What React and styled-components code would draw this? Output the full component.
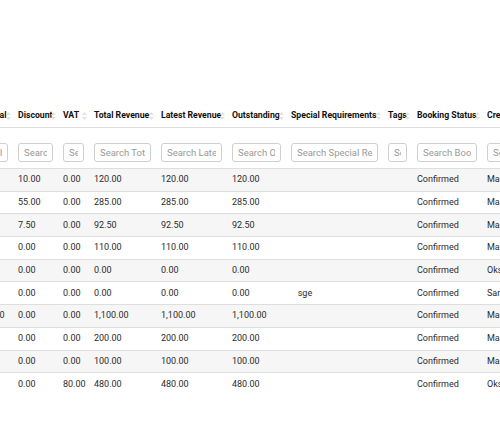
import React, { useLayoutEffect, useRef } from 'react';
import styled, { createGlobalStyle } from 'styled-components';

const GlobalStyle = createGlobalStyle`
	html, body {
		margin: 0;
		padding: 0;
		background: #fff;
		font-family: Roboto, 'Liberation Sans', Arial, sans-serif;
	}
`;

const columns = [
	{ key: 'ref', label: 'Booking Ref', width: 70 },
	{ key: 'guest', label: 'Guest', width: 80 },
	{ key: 'arrival', label: 'Arrival', width: 65 },
	{ key: 'departure', label: 'Departure', width: 65 },
	{ key: 'nights', label: 'Nights', width: 40 },
	{ key: 'sub', label: 'Sub Total', width: 48 },
	{ key: 'disc', label: 'Discount', width: 45 },
	{ key: 'vat', label: 'VAT', width: 31 },
	{ key: 'tr', label: 'Total Revenue', width: 67 },
	{ key: 'lr', label: 'Latest Revenue', width: 71 },
	{ key: 'out', label: 'Outstanding', width: 59 },
	{ key: 'sr', label: 'Special Requirements', width: 97 },
	{ key: 'tags', label: 'Tags', width: 29 },
	{ key: 'status', label: 'Booking Status', width: 70 },
	{ key: 'by', label: 'Created By', width: 80 },
	{ key: 'created', label: 'Created At', width: 80 },
];

const tableWidth = columns.reduce((sum, c) => sum + c.width, 0);

// where the table is scrolled to in the screenshot
const SCROLL_LEFT = 355;

const row = (ref, guest, arrival, departure, nights, sub, disc, vat, tr, out, sr, by, created) => ({
	ref, guest, arrival, departure, nights, sub, disc, vat, tr, lr: tr, out, sr, tags: '', status: 'Confirmed', by, created,
});

const bookings = [
	row('BK-1041', 'John Carter', '2024-05-02', '2024-05-04', '2', '130.00', '10.00', '0.00', '120.00', '120.00', '', 'Maria Kowalski', '2024-04-20'),
	row('BK-1042', 'Anna Schultz', '2024-05-03', '2024-05-06', '3', '340.00', '55.00', '0.00', '285.00', '285.00', '', 'Maria Kowalski', '2024-04-21'),
	row('BK-1043', 'Peter Novak', '2024-05-05', '2024-05-06', '1', '100.00', '7.50', '0.00', '92.50', '92.50', '', 'Maria Kowalski', '2024-04-22'),
	row('BK-1044', 'Lena Fischer', '2024-05-07', '2024-05-08', '1', '110.00', '0.00', '0.00', '110.00', '110.00', '', 'Maria Kowalski', '2024-04-23'),
	row('BK-1045', 'Tom Baker', '2024-05-08', '2024-05-08', '0', '0.00', '0.00', '0.00', '0.00', '0.00', '', 'Oksana Petrenko', '2024-04-25'),
	row('BK-1046', 'Eva Horvat', '2024-05-09', '2024-05-09', '0', '0.00', '0.00', '0.00', '0.00', '0.00', '\u00a0\u00a0\u00a0sge', 'Sarah Miller', '2024-04-26'),
	row('BK-1047', 'Marco Rossi', '2024-05-10', '2024-05-20', '10', '1,100.00', '0.00', '0.00', '1,100.00', '1,100.00', '', 'Maria Kowalski', '2024-04-27'),
	row('BK-1048', 'Ivy Chen', '2024-05-11', '2024-05-13', '2', '200.00', '0.00', '0.00', '200.00', '200.00', '', 'Maria Kowalski', '2024-04-28'),
	row('BK-1049', 'Sam Lee', '2024-05-12', '2024-05-13', '1', '100.00', '0.00', '0.00', '100.00', '100.00', '', 'Maria Kowalski', '2024-04-29'),
	row('BK-1050', 'Nina Berg', '2024-05-14', '2024-05-18', '4', '400.00', '0.00', '80.00', '480.00', '480.00', '', 'Oksana Petrenko', '2024-04-30'),
];

const Page = styled.div`
	padding-top: 104px;
`;

const Scroller = styled.div`
	width: 100%;
	overflow-x: auto;
	scrollbar-width: none;

	&::-webkit-scrollbar {
		display: none;
	}
`;

const Table = styled.table`
	width: ${(p) => p.$width}px;
	border-collapse: collapse;
	table-layout: fixed;
	font-size: 9px;
	color: #2b2b2b;
`;

const HeadCell = styled.th`
	position: relative;
	padding: 6px 5px;
	line-height: 11px;
	text-align: left;
	font-size: 8.7px;
	font-weight: 700;
	color: #111;
	white-space: nowrap;
	border-bottom: 1px solid #dedede;
`;

const SortIcon = styled.svg`
	position: absolute;
	right: 2px;
	top: 50%;
	margin-top: -4px;
	width: 5px;
	height: 8px;
`;

const FilterCell = styled.th`
	padding: 15px 5px 6px;
	border-bottom: 1px solid #dedede;
`;

const FilterInput = styled.input`
	box-sizing: border-box;
	display: block;
	width: 100%;
	height: 19px;
	margin: 0;
	padding: 0 5px;
	border: 1px solid #cfcfcf;
	border-radius: 3px;
	font: 400 9.5px Roboto, 'Liberation Sans', Arial, sans-serif;
	color: #333;
	background: #fff;
	outline: none;

	&::placeholder {
		color: #999;
	}
`;

const BodyRow = styled.tr`
	background: ${(p) => (p.$striped ? '#f6f6f6' : '#fff')};
	border-bottom: ${(p) => (p.$last ? 'none' : '1px solid #dedede')};
`;

const Cell = styled.td`
	height: 21.7px;
	padding: 0 5px;
	line-height: 11px;
	white-space: nowrap;
	overflow: hidden;
`;

const Sort = () => (
	<SortIcon viewBox="0 0 5 8">
		<path d="M2.5 0 L5 3 L0 3 Z" fill="#e2e2e2" />
		<path d="M2.5 8 L5 5 L0 5 Z" fill="#e2e2e2" />
	</SortIcon>
);

export default function App() {
	const scrollRef = useRef(null);

	useLayoutEffect(() => {
		if (scrollRef.current) scrollRef.current.scrollLeft = SCROLL_LEFT;
	}, []);

	return (
		<>
			<GlobalStyle />
			<Page>
				<Scroller ref={scrollRef}>
					<Table $width={tableWidth}>
						<colgroup>
							{columns.map((c) => (
								<col key={c.key} style={{ width: c.width }} />
							))}
						</colgroup>
						<thead>
							<tr>
								{columns.map((c) => (
									<HeadCell key={c.key}>
										{c.label}
										<Sort />
									</HeadCell>
								))}
							</tr>
							<tr>
								{columns.map((c) => (
									<FilterCell key={c.key}>
										<FilterInput placeholder={`Search ${c.label}`} />
									</FilterCell>
								))}
							</tr>
						</thead>
						<tbody>
							{bookings.map((b, i) => (
								<BodyRow key={b.ref} $striped={i % 2 === 0} $last={i === bookings.length - 1}>
									{columns.map((c) => (
										<Cell key={c.key}>{b[c.key]}</Cell>
									))}
								</BodyRow>
							))}
						</tbody>
					</Table>
				</Scroller>
			</Page>
		</>
	);
}
